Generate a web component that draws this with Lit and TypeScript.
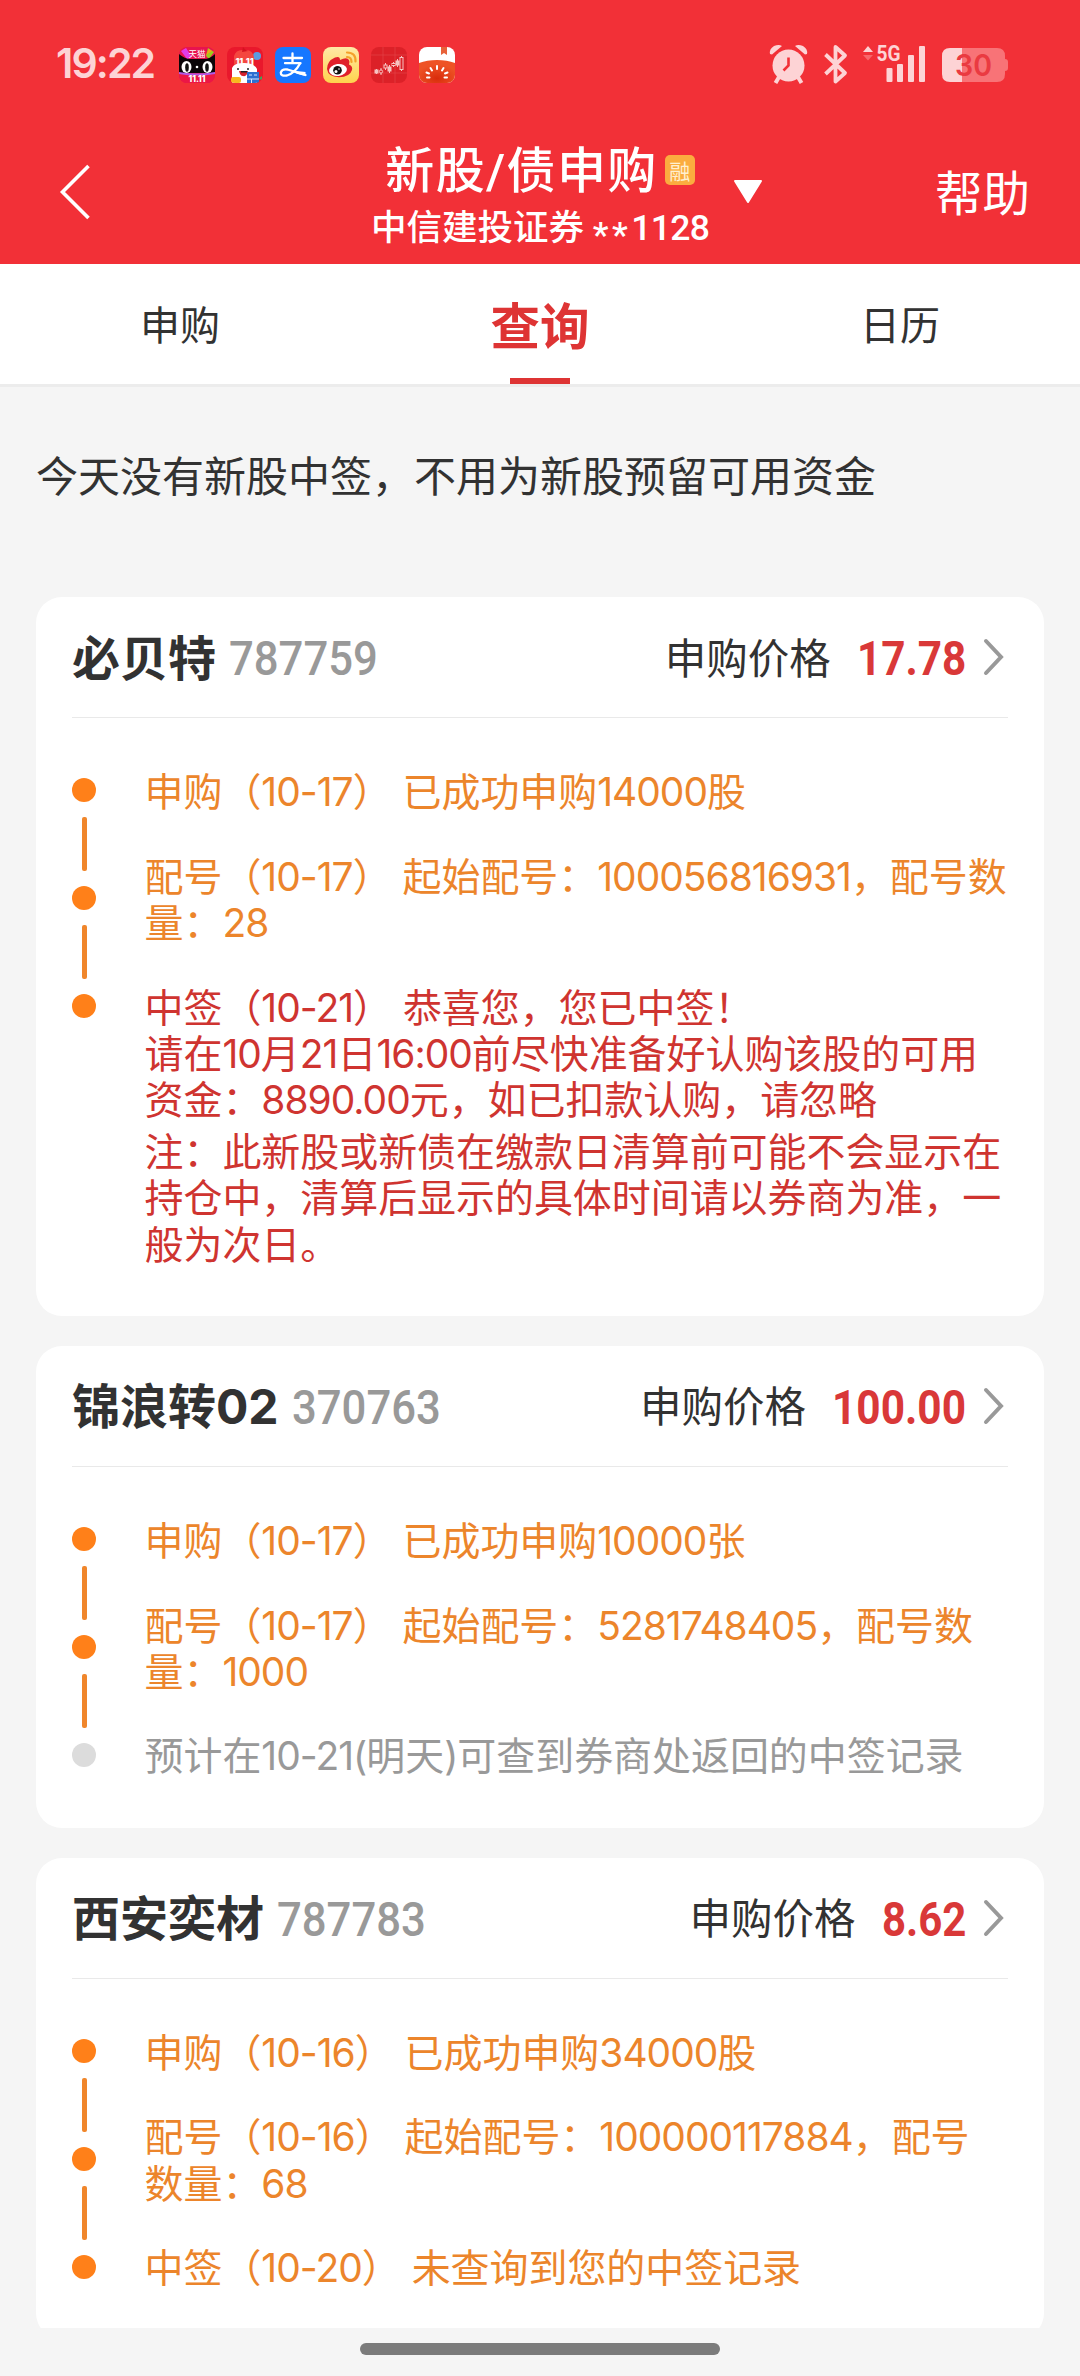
import { LitElement, html, svg, css, nothing } from "lit";
import { customElement, property } from "lit/decorators.js";
import { classMap } from "lit/directives/class-map.js";

type Tone = "orange" | "red" | "grey";

interface Step {
  tone: Tone;
  blocks: string[][];
}

interface Offer {
  name: string;
  code: string;
  price: string;
  steps: Step[];
}

const OFFERS: Offer[] = [
  {
    name: "必贝特",
    code: "787759",
    price: "17.78",
    steps: [
      { tone: "orange", blocks: [["申购（10-17） 已成功申购14000股"]] },
      { tone: "orange", blocks: [["配号（10-17） 起始配号：100056816931，配号数", "量：28"]] },
      {
        tone: "red",
        blocks: [
          ["中签（10-21） 恭喜您，您已中签！", "请在10月21日16:00前尽快准备好认购该股的可用", "资金：8890.00元，如已扣款认购，请忽略"],
          ["注：此新股或新债在缴款日清算前可能不会显示在", "持仓中，清算后显示的具体时间请以券商为准，一", "般为次日。"],
        ],
      },
    ],
  },
  {
    name: "锦浪转02",
    code: "370763",
    price: "100.00",
    steps: [
      { tone: "orange", blocks: [["申购（10-17） 已成功申购10000张"]] },
      { tone: "orange", blocks: [["配号（10-17） 起始配号：5281748405，配号数", "量：1000"]] },
      { tone: "grey", blocks: [["预计在10-21(明天)可查到券商处返回的中签记录"]] },
    ],
  },
  {
    name: "西安奕材",
    code: "787783",
    price: "8.62",
    steps: [
      { tone: "orange", blocks: [["申购（10-16） 已成功申购34000股"]] },
      { tone: "orange", blocks: [["配号（10-16） 起始配号：100000117884，配号", "数量：68"]] },
      { tone: "orange", blocks: [["中签（10-20） 未查询到您的中签记录"]] },
    ],
  },
];

const tmall = svg`
  <clipPath id="r1"><rect width="36" height="36" rx="8"/></clipPath>
  <g clip-path="url(#r1)">
    <rect width="36" height="36" fill="#e8134f"/>
    <path d="M2 4 7 1l6 9-5 2z" fill="#e23be8"/><path d="M27 9 29 1l6 4-5 7z" fill="#9ccb1c"/>
    <path d="M27 8l3-6 3 2z" fill="#f7a11a"/>
    <path d="M0 7q6 5 11 5h14q6 0 11-5v19H0z" fill="#0b0508"/>
    <text x="18" y="10" font-size="8.5" text-anchor="middle" fill="#fff" class="t">天猫</text>
    <ellipse cx="7.5" cy="20" rx="5" ry="6" fill="#fff"/><ellipse cx="28.5" cy="20" rx="5" ry="6" fill="#fff"/>
    <ellipse cx="8" cy="20.5" rx="1.8" ry="4.2" fill="#111"/><ellipse cx="28" cy="20.5" rx="1.8" ry="4.2" fill="#111"/>
    <circle cx="18" cy="20" r="1.3" fill="#fff"/>
    <path d="M0 25q18 3 36 0v3q-18 2-36 0z" fill="#b05ae8"/>
    <path d="M0 27q18 3 36 0v9H0z" fill="#ec1745"/>
    <text x="18" y="35" font-size="8.5" font-weight="800" text-anchor="middle" fill="#fff" class="t">11.11</text>
  </g>`;

const jd = svg`
  <clipPath id="r2"><rect width="36" height="36" rx="8"/></clipPath>
  <g clip-path="url(#r2)">
    <rect width="36" height="36" fill="#e9182c"/>
    <circle cx="30" cy="9" r="4" fill="#5c9be0"/>
    <path d="M7 21V9Q9 2 17 3q9-1 10 8v10z" fill="#f4473f"/>
    <path d="M16 0q2 3 5 4l-6 1z" fill="#d51320"/>
    <path d="M5 21q2-5 12-5t13 6v14H5z" fill="#fff"/>
    <text x="17.500" y="18" font-size="9" font-weight="800" text-anchor="middle" fill="#fff" class="t">11.11</text>
    <circle cx="11" cy="22" r="1" fill="#222"/><circle cx="21" cy="22" r="1" fill="#222"/>
    <path d="M12 24h9q-1 6-5 5-3 0-4-5z" fill="#d8222d"/>
    <path d="M14 24h6v1.500h-6z" fill="#222"/>
    <rect x="4" y="30" width="10" height="6" rx="2" fill="#f8b81f"/>
    <rect x="20" y="25" width="12" height="11" fill="#2c6fd0"/>
    <path d="M20 32h12M24.500 32v4M22 28h3M27 28h3" stroke="#d8e8ff" stroke-width="1"/>
    <path d="M32 31l3-2v5z" fill="#3da45a"/>
  </g>`;

const alipay = svg`
  <rect width="36" height="36" rx="8" fill="#1677ff"/>
  <g fill="none" stroke="#fff" stroke-width="2.300" stroke-linecap="round" stroke-linejoin="round">
    <path d="M8.500 11H27M17.500 6.500V16M10 16.200h15.500"/>
    <path d="M25 16.500Q20 26 12 28.500 5.500 29.500 5.800 25.500 7 21.500 12.500 22.500 19 24.500 30.500 28"/>
  </g>
  <path d="M17 23.500 30.500 25v3.600Q26 29 17 24.600z" fill="#fff"/>`;

const weibo = svg`
  <defs><linearGradient id="wb" x1="0" y1="0" x2="0" y2="1"><stop offset="0" stop-color="#ffe9a6"/><stop offset="1" stop-color="#ffd24d"/></linearGradient></defs>
  <rect width="36" height="36" rx="8" fill="url(#wb)"/>
  <path d="M4 22Q4 14 12 10.500q5-2 5 2.500 7-3.500 9 0 1 2 0 4.500 4 1.500 3 5.500-2 7-13 7.200Q5 30 4 22z" fill="#e0202b"/>
  <ellipse cx="15" cy="23" rx="9" ry="6" fill="#fff" transform="rotate(-8 15 23)"/>
  <circle cx="14.500" cy="23.300" r="4.300" fill="#111"/><circle cx="13" cy="24.500" r="1.500" fill="#fff"/><circle cx="16" cy="22" r=".8" fill="#fff"/>
  <path d="M24 10q4.500 0 4.500 5M24 5.500q9 0 8.500 9" fill="none" stroke="#f5a02a" stroke-width="2.200" stroke-linecap="round"/>`;

const stocks = svg`
  <rect width="36" height="36" rx="8" fill="#dc2128"/>
  <path d="M12 0v36M24 0v36M0 8h36M0 26h36" stroke="#e4484b" stroke-width=".6"/>
  <g stroke="#f7c3c2" fill="#f7c3c2">
    <path d="M5.500 22v5M10 21v7M14.500 16v7M18.500 18v8M22.500 15v5M26.500 12v8M30.500 9v15" stroke-width="1"/>
    <rect x="4" y="23" width="3" height="3"/><rect x="17" y="20" width="3" height="4"/><rect x="25" y="14" width="3" height="4"/>
    <g fill="#dc2128"><circle cx="10" cy="24.500" r="1.600"/><rect x="13" y="18" width="3" height="3"/><rect x="21" y="16.500" width="3" height="2"/><rect x="29" y="10.500" width="3" height="12"/></g>
  </g>`;

const tomato = svg`
  <clipPath id="r6"><rect width="36" height="36" rx="8"/></clipPath>
  <defs><radialGradient id="tm" cx=".5" cy=".8" r=".6"><stop offset="0" stop-color="#d92c0b"/><stop offset="1" stop-color="#ee5325"/></radialGradient></defs>
  <g clip-path="url(#r6)">
    <rect width="36" height="36" fill="#fff"/>
    <path d="M22 0h6v8l-3-2-3 2z" fill="#e8623a"/>
    <path d="M0 16Q8 13 18 13t18 3v20H0z" fill="url(#tm)"/>
    <g stroke="#fff" stroke-width="2" stroke-linecap="round">
      <path d="M18 19v3M11.500 21l1.500 2.500M24.500 21 23 23.500M7.500 25.500l2.500 1M28.500 25.500l-2.500 1M8 30.500h2.500M25.500 30.500H28"/>
    </g>
  </g>`;

@customElement("status-bar")
class StatusBar extends LitElement {
  static styles = css`
    :host { display: block; }
    .bar { height: 120px; box-sizing: border-box; padding: 10px 72px 0 56px; display: flex; align-items: center; color: #fdd3d5; }
    .time { font: 600 41px/1 Inter, sans-serif; width: 123px; letter-spacing: -1.900px; white-space: nowrap; padding-bottom: 3px; }
    .apps { display: flex; gap: 12px; flex: 1; }
    .apps svg { width: 36px; height: 36px; display: block; }
    .sys { display: block; width: 240px; height: 52px; }
    .t { font-family: Inter, "Noto Sans CJK SC", sans-serif; }
    .g5 { font: 700 22px Roboto, sans-serif; }
    .pct { font: 600 30px Inter, sans-serif; }
  `;
  render() {
    return html`<div class="bar">
      <div class="time">19:22</div>
      <div class="apps">
        ${[tmall, jd, alipay, weibo, stocks, tomato].map((a) => html`<svg viewBox="0 0 36 36">${a}</svg>`)}
      </div>
      <svg class="sys" viewBox="768 39 240 52">
        <g fill="#fdd3d5">
          <circle cx="788.500" cy="65.500" r="16"/>
          <path d="M770 54q-1-5 4-8 5-2 8 0l-10 8.500zM807 54q1-5-4-8-5-2-8 0l10 8.500z"/>
          <path d="M779 77l-3.500 6M798 77l3.500 6" stroke="#fdd3d5" stroke-width="4"/>
        </g>
        <path d="M788.500 57.500v8l-5 5" fill="none" stroke="#f23037" stroke-width="2.600"/>
        <path d="M825.500 54.500 845 73l-9.500 8.500V47l9.500 8.500L825.500 74" fill="none" stroke="#fdd3d5" stroke-width="3.800" stroke-linejoin="round"/>
        <path d="M863 52l5-6 5 6z" fill="#fdd3d5"/><path d="M863 55l5 5.500 5-5.500z" fill="#f8666b"/>
        <text class="g5" x="876.500" y="61" textLength="24" lengthAdjust="spacingAndGlyphs" fill="#fdd3d5">5G</text>
        <g fill="#fdd3d5">
          <rect x="886.500" y="68" width="6" height="14" rx="1"/><rect x="897" y="64" width="6" height="18" rx="1"/>
          <rect x="908" y="55" width="6" height="27" rx="1"/><rect x="919" y="46" width="6" height="36" rx="1"/>
        </g>
        <path d="M962 48h35q8 0 8 8v3q3 0 3 3v6q0 3-3 3v3q0 8-8 8h-35z" fill="#f87377"/>
        <path d="M962 48h-12q-8 0-8 8v18q0 8 8 8h12z" fill="#fdd3d5"/>
        <text class="pct" x="955" y="76" textLength="37" lengthAdjust="spacingAndGlyphs" fill="#ea3a41">30</text>
      </svg>
    </div>`;
  }
}

@customElement("nav-header")
class NavHeader extends LitElement {
  static styles = css`
    :host { display: block; }
    .nav { height: 144px; display: grid; grid-template-columns: 1fr 335px 1fr; align-items: center; color: #fff; }
    .back { width: 34px; height: 58px; margin-left: 58px; display: block; }
    .mid { display: flex; flex-direction: column; align-items: center; padding-top: 5px; }
    .row { display: flex; align-items: center; height: 66px; gap: 7px; padding-top: 2px; }
    .title { font: 500 49px/64px Roboto, "Noto Sans CJK SC", sans-serif; letter-spacing: 1.400px; white-space: nowrap; padding-top: 5px; }
    .badge { width: 30px; height: 30px; border-radius: 5px; background: #fbac3f; color: #fff0d0; font: 400 21px/30px "Noto Sans CJK SC", sans-serif; text-align: center; }
    .sub { font: 500 35.500px/46px Roboto, "Noto Sans CJK SC", sans-serif; white-space: nowrap; padding-top: 2px; }
    .stars { display: inline-block; line-height: 40px; vertical-align: -7px; letter-spacing: 3.500px; }
    .tail { letter-spacing: -.700px; }
    .end { display: flex; align-items: center; justify-content: space-between; padding: 0 50px 0 25px; }
    .caret { width: 30px; height: 24px; display: block; }
    .help { font: 400 47.500px/60px "Noto Sans CJK SC", sans-serif; white-space: nowrap; padding-bottom: 3px; }
  `;
  render() {
    return html`<div class="nav">
      <svg class="back" viewBox="0 0 34 58"><path d="M30.500 3 4.500 29l26 26" fill="none" stroke="#fff" stroke-width="3.600"/></svg>
      <div class="mid">
        <div class="row"><span class="title">新股/债申购</span><span class="badge">融</span></div>
        <div class="sub">中信建投证券 <span class="stars">**</span><span class="tail">1128</span></div>
      </div>
      <div class="end">
        <svg class="caret" viewBox="0 0 30 24"><path d="M2 1h26L15 22z" fill="#fff" stroke="#fff" stroke-width="2" stroke-linejoin="round"/></svg>
        <span class="help">帮助</span>
      </div>
    </div>`;
  }
}

@customElement("tab-strip")
class TabStrip extends LitElement {
  static styles = css`
    :host { display: block; }
    .tabs { height: 120px; display: grid; grid-template-columns: repeat(3, 1fr); background: #fff; border-bottom: 3px solid #ececec; }
    .tab { display: flex; flex-direction: column; align-items: center; justify-content: space-between; font: 400 40px/119px "Noto Sans CJK SC", sans-serif; color: #323232; height: 120px; }
    .label { height: 114px; }
    .active { font-weight: 700; font-size: 49.500px; color: #de3434; }
    .mark { width: 60px; height: 6px; background: #de3434; }
  `;
  render() {
    return html`<div class="tabs">
      ${["申购", "查询", "日历"].map(
        (t, i) => html`<div class=${classMap({ tab: true, active: i === 1 })}>
          <span class="label">${t}</span>${i === 1 ? html`<span class="mark"></span>` : nothing}
        </div>`,
      )}
    </div>`;
  }
}

/* Tightens runs of digits inside Chinese text. */
const line = (text: string) =>
  html`<div>${text
    .split(/([\d\-:.()]+)/)
    .map((part, i) => (i % 2 ? html`<span class="num">${part}</span>` : part))}</div>`;

/* Condensed digits: fixed advance per digit, narrow decimal point. */
const figures = (text: string, cls: string) => {
  const width = [...text].reduce((w, c) => w + (c === "." ? 10 : 24.8), 0);
  return html`<svg class=${cls} width=${width + 8} height="76">
    <text x="4" y="56" textLength=${width} lengthAdjust="spacingAndGlyphs">${text}</text>
  </svg>`;
};

@customElement("offer-card")
class OfferCard extends LitElement {
  @property({ attribute: false }) offer!: Offer;
  static styles = css`
    :host { display: block; }
    .card { background: #fff; border-radius: 26px; padding: 0 36px; font-family: Inter, "Noto Sans CJK SC", sans-serif; }
    .head { height: 120px; display: flex; align-items: center; border-bottom: 1.500px solid #e9e9e9; white-space: nowrap; color: #323232; }
    .name { font-size: 48px; font-weight: 700; line-height: 60px; padding-top: 3px; }
    .code { display: block; overflow: visible; margin: 0 auto 0 9px; font: 500 48px Roboto, sans-serif; fill: #999; }
    .label { font-size: 41.500px; line-height: 60px; padding-top: 3px; }
    .price { display: block; overflow: visible; margin-left: 22px; font: 700 48px Roboto, sans-serif; fill: #d93838; }
    .go { width: 24px; height: 38px; margin: 0 2px 0 12px; display: block; }
    .body { display: flex; padding: 51px 0 48px; }
    .rail { width: 24px; margin: 9px 48.500px 0 0; display: flex; flex-direction: column; align-items: center; gap: 15px; }
    .dot { width: 24px; height: 24px; border-radius: 50%; background: #ff8019; }
    .dot.off { background: #dcdcdc; }
    .line { width: 5px; height: 54px; border-radius: 2px; background: #f0862b; }
    .steps { display: flex; flex-direction: column; gap: 38.500px; }
    .step { display: flex; flex-direction: column; gap: 6px; font-size: 38.950px; line-height: 46.200px; white-space: nowrap; }
    .num { letter-spacing: -.980px; }
    .orange { color: #ec852b; }
    .red { color: #cf3430; }
    .grey { color: #999; }
  `;
  render() {
    const o = this.offer;
    return html`<div class="card">
      <div class="head">
        <span class="name">${o.name}</span>${figures(o.code, "code")}
        <span class="label">申购价格</span>${figures(o.price, "price")}
        <svg class="go" viewBox="0 0 24 38"><path d="M4 3l15 16L4 35" fill="none" stroke="#999" stroke-width="4" stroke-linecap="round"/></svg>
      </div>
      <div class="body">
        <div class="rail">
          ${o.steps.map(
            (s, i) => html`${i ? html`<span class="line"></span>` : nothing}
              <span class=${classMap({ dot: true, off: s.tone === "grey" })}></span>`,
          )}
        </div>
        <div class="steps">
          ${o.steps.map(
            (s) => html`<div class="step ${s.tone}">
              ${s.blocks.map((b) => html`<div>${b.map(line)}</div>`)}
            </div>`,
          )}
        </div>
      </div>
    </div>`;
  }
}

@customElement("app-root")
class AppRoot extends LitElement {
  static styles = css`
    :host { display: block; }
    .page { width: 1080px; height: 2376px; background: #f5f5f5; display: flex; flex-direction: column; overflow: hidden; }
    .top { background: #f23037; }
    .content { flex: 1; min-height: 0; overflow: hidden; padding: 0 36px; }
    .notice { height: 210px; box-sizing: border-box; padding-top: 57px; font: 400 42px/60px "Noto Sans CJK SC", sans-serif; color: #323232; white-space: nowrap; }
    .list { display: flex; flex-direction: column; gap: 30px; }
    .foot { height: 48px; display: flex; justify-content: center; align-items: flex-start; padding-top: 15px; box-sizing: border-box; }
    .pill { width: 360px; height: 12px; border-radius: 6px; background: #7b7b7b; }
  `;
  render() {
    return html`<div class="page">
      <div class="top"><status-bar></status-bar><nav-header></nav-header></div>
      <tab-strip></tab-strip>
      <div class="content">
        <div class="notice">今天没有新股中签，不用为新股预留可用资金</div>
        <div class="list">${OFFERS.map((o) => html`<offer-card .offer=${o}></offer-card>`)}</div>
      </div>
      <div class="foot"><span class="pill"></span></div>
    </div>`;
  }
}
